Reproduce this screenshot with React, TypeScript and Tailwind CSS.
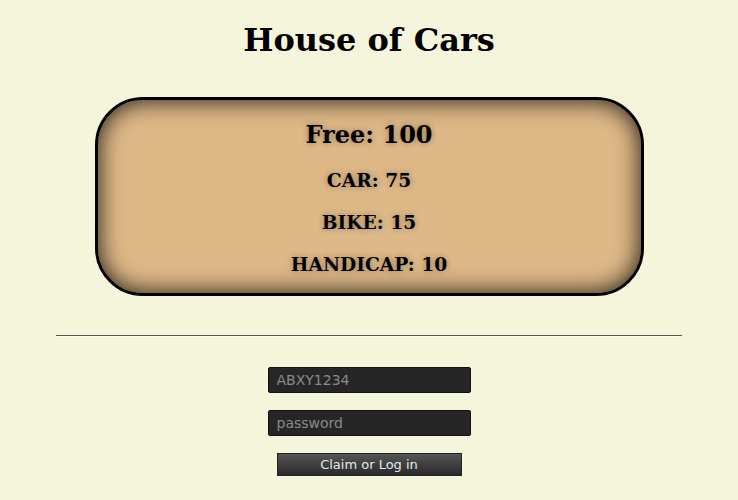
export default function App() {
  const counts = [
    { label: 'CAR', n: 75 },
    { label: 'BIKE', n: 15 },
    { label: 'HANDICAP', n: 10 },
  ];
  return (
    <div className="min-h-[500px] w-full bg-[#f5f5dc] flex flex-col items-center font-['DejaVu_Serif',serif] text-black">
      <h1 className="mt-[22px] text-[32px] leading-[37px] font-bold">House of Cars</h1>
      <div className="mt-[38px] w-[549px] h-[199px] rounded-[48px] border-[3px] border-black bg-[#deb887] shadow-[inset_0_0_24px_rgba(0,0,0,0.9)] flex flex-col items-center pt-[21px] [text-shadow:0_0_6px_rgba(0,0,0,0.35)]">
        <div className="text-[24px] leading-[28px] font-bold">Free: 100</div>
        {counts.map((c) => (
          <div key={c.label} className="mt-[20px] text-[18.7px] leading-[22px] font-bold">
            {c.label}: {c.n}
          </div>
        ))}
      </div>
      <div className="mt-[39px] w-[626px] border-t border-[#555] border-b border-b-[#fbfbef]" />
      <div className="mt-[30px] flex flex-col items-center font-['DejaVu_Sans',sans-serif]">
        <input
          placeholder="ABXY1234"
          className="w-[203px] h-[26px] bg-[#262626] border border-[#111] rounded-[2px] px-[8px] text-[14px] text-[#ccc] placeholder:text-[#8a8a8a] outline-none"
        />
        <input
          type="password"
          placeholder="password"
          className="mt-[17px] w-[203px] h-[26px] bg-[#262626] border border-[#111] rounded-[2px] px-[8px] text-[14px] text-[#ccc] placeholder:text-[#8a8a8a] outline-none"
        />
        <button className="mt-[17px] w-[185px] h-[23px] bg-gradient-to-b from-[#555] to-[#2a2a2a] border border-[#222] text-[13px] leading-[18px] text-[#e8e8e8]">
          Claim or Log in
        </button>
      </div>
    </div>
  );
}
